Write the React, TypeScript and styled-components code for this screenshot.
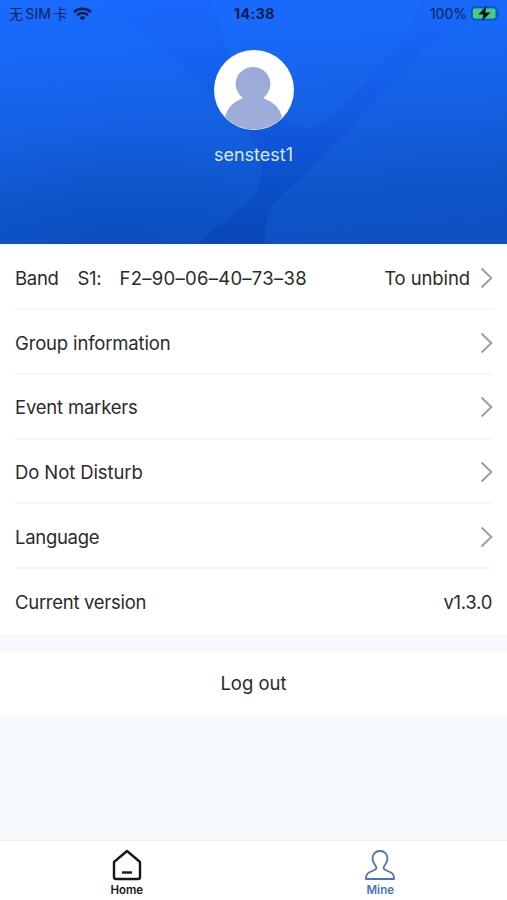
import React from "react";
import styled, { createGlobalStyle } from "styled-components";

const GlobalStyle = createGlobalStyle`
  * { box-sizing: border-box; }
  body { margin: 0; background: #f5faff; }
`;

const Screen = styled.div`
  width: 507px;
  height: 900px;
  display: flex;
  flex-direction: column;
  overflow: hidden;
  background: #f6faff;
  color: #2b2b2b;
  font-family: Inter, "Noto Sans CJK SC", sans-serif;
  font-size: 18.5px;
`;

const Header = styled.header`
  position: relative;
  height: 244.4px;
  flex: none;
  display: flex;
  flex-direction: column;
  align-items: center;
  background: linear-gradient(176deg, #1a6afd 0%, #1869f8 20%, #145fdf 53%, #0e53c6 82%, #0d50c0 100%);
`;

const Backdrop = styled.svg`
  position: absolute;
  inset: 0;
`;

const StatusBar = styled.div`
  position: relative;
  width: 100%;
  height: 28px;
  padding: 0 7px 0 9px;
  display: grid;
  grid-template-columns: 1fr auto 1fr;
  align-items: center;
  color: #082456;
  font-size: 14px;
  line-height: 28px;
`;

const StatusGroup = styled.div<{ $end?: boolean }>`
  display: flex;
  align-items: center;
  gap: ${(p) => (p.$end ? 4 : 6)}px;
  justify-content: ${(p) => (p.$end ? "flex-end" : "flex-start")};
`;

const Carrier = styled.span`
  display: flex;
  gap: 2px;
  letter-spacing: 0.2px;
`;

const Label = styled.span<{ $track?: number }>`
  white-space: pre;
  letter-spacing: ${(p) => p.$track ?? 0}px;
`;

const Clock = styled.span`
  color: #061c48;
  font-weight: 700;
  letter-spacing: 0.5px;
`;

const Avatar = styled.svg`
  position: relative;
  margin-top: 21.5px;
`;

const UserName = styled.div`
  position: relative;
  margin-top: 13.5px;
  color: #d9eaff;
  font-size: 18px;
  line-height: 24px;
`;

const List = styled.main`
  height: 389.6px;
  flex: none;
  padding: 0 14px 0 15px;
  background: #fff;
`;

const Row = styled.div`
  height: 64.8px;
  display: flex;
  align-items: center;
  justify-content: space-between;
  padding-top: 2.6px;
  border-bottom: 2px solid #f6f6f6;
  &:first-child { height: 65.6px; padding-top: 3.4px; }
  &:last-child { height: 64px; border-bottom: 0; padding: 2px 1px 0 0; }
`;

const Device = styled.div`
  display: grid;
  grid-template-columns: 62.5px 42px auto;
`;

const RowEnd = styled.div`
  display: flex;
  align-items: center;
  gap: 10px;
`;

const LogOut = styled.button`
  height: 63px;
  flex: none;
  margin-top: 18px;
  padding: 0 0 1px;
  border: 0;
  background: #fff;
  color: inherit;
  font: inherit;
`;

const TabBar = styled.nav`
  height: 60px;
  margin-top: auto;
  display: grid;
  grid-template-columns: 1fr 1fr;
  border-top: 1px solid #eceff3;
  background: #fff;
`;

const Tab = styled.div<{ $active?: boolean }>`
  display: flex;
  flex-direction: column;
  align-items: center;
  padding-top: 8px;
  color: ${(p) => (p.$active ? "#4a73ba" : "#171717")};
  font-size: 11.5px;
  font-weight: 600;
  line-height: 14px;
  gap: 2px;
`;

const Chevron = () => (
  <svg width="13" height="22" viewBox="0 0 13 22" fill="none" stroke="#9b9b9b" strokeWidth="1.8">
    <path d="M1.5 1.5 11.4 11 1.5 20.5" />
  </svg>
);

const Wifi = () => (
  <svg width="19" height="14" viewBox="0 0 19 14" fill="none" stroke="#061c48" strokeWidth="2.5">
    <path d="M1 5.1a12.3 12.3 0 0 1 17 0M4.1 8.2a7.8 7.8 0 0 1 10.8 0" />
    <path d="M9.5 13.5 6.6 10.6a4.2 4.2 0 0 1 5.8 0Z" fill="#061c48" stroke="none" />
  </svg>
);

const Battery = () => (
  <svg width="29" height="16" viewBox="0 0 29 16">
    <rect x=".6" y="1.1" width="25.2" height="12.8" rx="3.8" fill="none" stroke="#0b53a9" strokeWidth="1.2" />
    <rect x="2" y="2.5" width="22.4" height="10" rx="2" fill="#46cf79" />
    <path d="M27 5q1.7 2.5 0 5Z" fill="#0b48a5" />
    <path d="M15.3 0 7.3 8.5h5L11 15 19.5 6.5h-5.2Z" fill="#03152a" />
  </svg>
);

const rows = [
  { name: "Group information", track: -0.16 },
  { name: "Event markers", track: -0.2 },
  { name: "Do Not Disturb", track: -0.1 },
  { name: "Language", track: -0.3 },
];

export default function App() {
  return (
    <Screen>
      <GlobalStyle />
      <Header>
        <Backdrop width="507" height="244" viewBox="0 0 507 244">
          <defs>
            <linearGradient id="ribbon" x1="0" y1="0" x2="0" y2="1">
              <stop offset="0" stopColor="#145bf5" stopOpacity="0.1" />
              <stop offset=".3" stopColor="#1159ec" stopOpacity=".4" />
              <stop offset=".6" stopColor="#0d51d5" stopOpacity=".7" />
              <stop offset="1" stopColor="#0745b4" stopOpacity=".85" />
            </linearGradient>
            <radialGradient id="shade">
              <stop offset="0" stopColor="#0546b0" stopOpacity=".25" />
              <stop offset="1" stopColor="#0546b0" stopOpacity="0" />
            </radialGradient>
          </defs>
          <ellipse cx="115" cy="235" rx="150" ry="120" fill="url(#shade)" />
          <path d="M108 0 160 48Q205 84 245 126Q268 155 259 187Q252 203 226 220Q209 231 198 244H265Q264 224 270 209Q279 196 302 177L410 66Q440 34 507 0H420Q415 31 380 66L339 112Q310 139 282 119Q236 78 220 30L210 0Z" fill="url(#ribbon)" />
        </Backdrop>
        <StatusBar>
          <StatusGroup>
            <Carrier><span>无</span><span>SIM</span><span>卡</span></Carrier>
            <Wifi />
          </StatusGroup>
          <Clock>14:38</Clock>
          <StatusGroup $end><Label>100%</Label><Battery /></StatusGroup>
        </StatusBar>
        <Avatar width="80" height="80" viewBox="0 0 80 80">
          <defs>
            <clipPath id="avatar"><circle cx="40" cy="40" r="39.5" /></clipPath>
            <linearGradient id="person" x1="0" y1="0" x2="0" y2="1">
              <stop stopColor="#9aabd9" />
              <stop offset="1" stopColor="#a0add8" />
            </linearGradient>
          </defs>
          <circle cx="40" cy="40" r="40" fill="#fff" />
          <g clipPath="url(#avatar)" fill="url(#person)">
            <path d="M39 17a17 17 0 0 1 10.8 30.4Q49 48.3 51.2 49Q65 54 68 67V80H11V67Q14 54 27 49Q29.8 48 28.2 47.4A17 17 0 0 1 39 17Z" />
          </g>
        </Avatar>
        <UserName>senstest1</UserName>
      </Header>
      <List>
        <Row>
          <Device>
            <Label $track={-0.3}>Band</Label>
            <Label $track={-0.3}>S1:</Label>
            <Label $track={0.27}>F2–90–06–40–73–38</Label>
          </Device>
          <RowEnd><Label $track={-0.1}>To unbind</Label><Chevron /></RowEnd>
        </Row>
        {rows.map((r) => (
          <Row key={r.name}><Label $track={r.track}>{r.name}</Label><Chevron /></Row>
        ))}
        <Row><Label $track={-0.28}>Current version</Label><Label $track={-0.3}>v1.3.0</Label></Row>
      </List>
      <LogOut><Label>Log out</Label></LogOut>
      <TabBar>
        <Tab>
          <svg width="30" height="32" viewBox="0 0 30 32" fill="none" stroke="currentColor" strokeWidth="2.4" strokeLinejoin="round">
            <path d="M2 13 15 2 28 13V28Q28 30 26 30H4Q2 30 2 28Z" /><path d="M10 23.5h10" />
          </svg>
          Home
        </Tab>
        <Tab $active>
          <svg width="30" height="32" viewBox="0 0 30 32" fill="none" stroke="currentColor" strokeWidth="1.8" strokeLinejoin="round">
            <path d="M15 2c-4.6 0-7.5 3.3-7.5 7.6 0 3.5 2 5.6 3.5 8 1 1.8.2 2.6-1.6 3.4L4 23.5C1.7 24.7 1 26 1 30H29c0-4-.7-5.3-3-6.5L20.6 21c-1.8-.8-2.6-1.6-1.6-3.4 1.5-2.4 3.5-4.5 3.5-8C22.5 5.3 19.6 2 15 2Z" />
          </svg>
          Mine
        </Tab>
      </TabBar>
    </Screen>
  );
}
